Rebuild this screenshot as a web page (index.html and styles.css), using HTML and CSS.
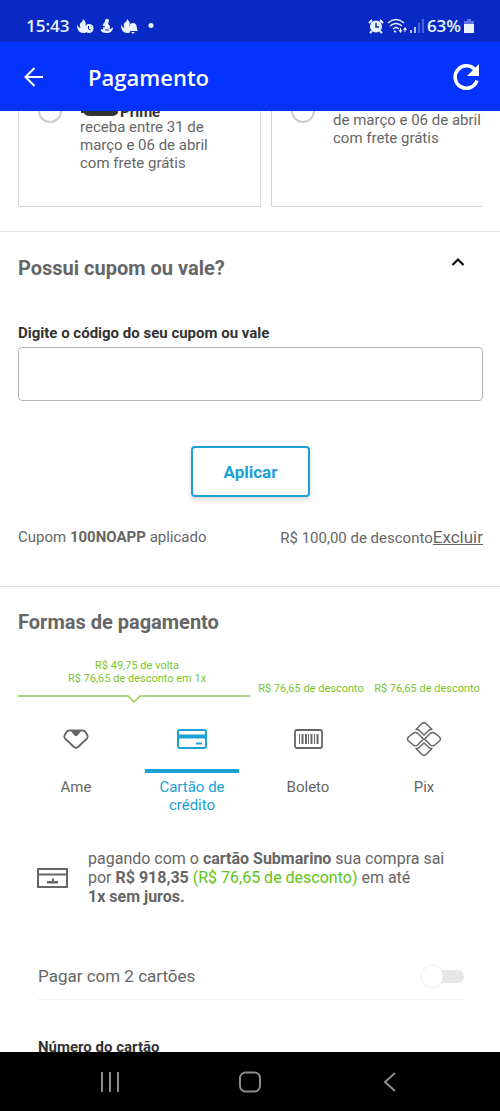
FILE: index.html
```html
<!DOCTYPE html>
<html lang="pt-BR">
<head>
<meta charset="utf-8">
<meta name="viewport" content="width=device-width, initial-scale=1">
<title>Pagamento</title>
<link rel="stylesheet" href="styles.css">
</head>
<body>
<div class="screen">
  <div class="status">
    <div class="status-group">
      <span>15:43</span>
      <svg class="weather" width="18" height="16" viewBox="0 0 18 16"><path d="M1 6c0 8 3 9 8 9 3-1 3-6 0-7 2-3 0-5-2-7 0 4-4 3-3 7 0 2 2 3 3 1-3 2-5 0-6-3z" fill="#eaf3ff"/><circle cx="13" cy="10.500" r="4.500" fill="#eaf3ff"/><path d="M12.500 8v3l2 1" fill="none" stroke="#0829c4"/></svg>
      <svg class="weather" width="14" height="16" viewBox="0 0 14 16"><path d="M5 3c0-3 4-3 4 0l-1 3c3 2 2 5 1 5 2 0 3-1 4-2 0 4-3 6-6 6s-7-1-6-4c2 1 3 0 2-3-1-2 2-3 2-5z" fill="#eaf3ff"/><path d="M2 8l3 1m0 3h4" stroke="#0829c4"/></svg>
      <svg class="weather" width="18" height="16" viewBox="0 0 18 16"><path d="M1 6c0 8 3 9 8 9 2-1 2-6 0-7 2-3 0-5-2-7 0 4-4 3-3 7 0 2 2 3 3 1-3 2-5 0-6-3z" fill="#eaf3ff"/><path d="M8 13c2-2 0-8 5-8s3 6 5 8zM11 14h4l-2 2z" fill="#eaf3ff"/></svg>
      <svg class="more" width="6" height="16" viewBox="0 0 6 16"><circle cx="3" cy="7.500" r="2.500" fill="#eaf3ff"/></svg>
    </div>
    <div class="status-group status-right">
      <svg width="16" height="16" viewBox="0 0 16 16"><circle cx="8" cy="8.500" r="6" fill="#eaf3ff"/><path d="M1 5l3-3M12 2l3 3M4 13l-2 2M12 13l2 2" stroke="#eaf3ff" stroke-width="2"/><path d="M8 5v4h3" fill="none" stroke="#0829c4" stroke-width="1.500"/></svg>
      <svg width="20" height="16" viewBox="0 0 20 16" fill="none" stroke="#eaf3ff" stroke-width="1.500"><path d="M1 5q8-7 16 0M3 8q6-5 12 0M6 11q3-3 6 0M7 13l2 1"/><path d="M13.500 10v4M18 14v-4" stroke-width="1"/><path d="M11.500 12h4l-2 3zM16 12h4l-2-3z" fill="#eaf3ff" stroke="none"/></svg>
      <svg class="signal" width="14" height="16" viewBox="0 0 14 16"><path d="M1 12v3M5 9v6" stroke="#eaf3ff" stroke-width="1.500"/><path d="M9 5v10M13 1v14" stroke="#5b74e6" stroke-width="1.500"/></svg>
      <span>63%</span>
      <svg class="battery" width="10" height="16" viewBox="0 0 10 16"><path d="M0 3h3V1h4v2h3v4H0z" fill="#5b74e6"/><path d="M0 6h10v9H0z" fill="#eaf3ff"/></svg>
    </div>
  </div>
  <header class="appbar">
    <button class="icon-button" type="button" aria-label="Voltar"><svg width="20" height="20" viewBox="0 0 20 20" fill="none" stroke="#fff" stroke-width="2"><path d="M19 10H2M10.500 1L1.500 10l9 9"/></svg></button>
    <h1 class="title">Pagamento</h1>
    <button class="icon-button" type="button" aria-label="Atualizar"><svg width="28" height="28" viewBox="0 0 28 28"><path d="M23.500 7.500A11.200 11.200 0 1 0 25 17.500" fill="none" stroke="#fff" stroke-width="3.600"/><path d="M27 1v12H15z" fill="#fff"/></svg></button>
  </header>

  <main class="content">
    <section class="shipping">
      <label class="ship-card">
        <input class="radio" type="radio" name="frete">
        <span class="ship-text"><strong class="ship-name"><svg width="40" height="14" viewBox="0 0 40 14"><path d="M1 1h6v3h31v4q-2 3-6 3H10q-5 0-6-3H1z" fill="#333"/></svg>Prime</strong>receba entre 31 de março e 06 de abril com frete grátis</span>
      </label>
      <label class="ship-card ship-next">
        <input class="radio" type="radio" name="frete">
        <span class="ship-text">de março e 06 de abril com frete grátis</span>
      </label>
    </section>

    <section class="coupon">
      <div class="coupon-head">
        <h2 class="heading">Possui cupom ou vale?</h2>
        <button class="icon-button" type="button" aria-label="Recolher"><svg width="14" height="10" viewBox="0 0 14 10"><path d="M1.500 8L7 2.500 12.500 8" fill="none" stroke="#111" stroke-width="2.200"/></svg></button>
      </div>
      <label class="field-label" for="cupom">Digite o código do seu cupom ou vale</label>
      <input class="text-input" id="cupom" type="text">
      <button class="apply" type="button">Aplicar</button>
      <div class="applied">
        <span>Cupom <strong>100NOAPP</strong> aplicado</span>
        <span class="discount">R$ 100,00 de desconto<a class="remove" href="#">Excluir</a></span>
      </div>
    </section>

    <section class="payment">
      <h2 class="heading">Formas de pagamento</h2>
      <div class="offers">
        <div class="offer-wide">
          <p class="offer-text">R$ 49,75 de volta<br>R$ 76,65 de desconto em 1x</p>
          <div class="bracket"><span class="rule"></span><svg width="14" height="8" viewBox="0 0 14 8"><path d="M0 1h1l6 6 6-6h1" fill="none" stroke="#95cb55" stroke-width="1.500"/></svg><span class="rule"></span></div>
        </div>
        <p class="offer">R$ 76,65 de desconto</p>
        <p class="offer">R$ 76,65 de desconto</p>
      </div>
      <div class="methods">
        <button class="method" type="button">
          <svg width="36" height="36" viewBox="0 0 36 36"><path d="M11.500 9.500h13q1.500 0 2.500 1l2.500 4q.800 1.800-.500 3l-9 8.500q-2 1.500-4 0l-9-8.500q-1.300-1.200-.500-3l2.500-4q1-1 2.500-1z" fill="none" stroke="#666" stroke-width="1.800" stroke-linejoin="round"/><path d="M12 9h12l-4.500 5.500q-1.500 1.300-3 0z" fill="#666"/></svg>
          <span class="method-name">Ame</span>
        </button>
        <button class="method selected" type="button">
          <svg width="36" height="36" viewBox="0 0 36 36"><rect x="4" y="9" width="28" height="18" rx="2" fill="none" stroke="#1ba1d6" stroke-width="2"/><path d="M4 15.500h28" stroke="#1ba1d6" stroke-width="4"/><path d="M22 22.500h6" stroke="#1ba1d6" stroke-width="2"/></svg>
          <span class="method-name">Cartão de crédito</span>
        </button>
        <button class="method" type="button">
          <svg width="36" height="36" viewBox="0 0 36 36"><rect x="5" y="9" width="27" height="18" rx="2" fill="none" stroke="#666" stroke-width="1.800"/><path d="M9.500 13v10M18.500 13v10M24.500 13v10" stroke="#666"/><path d="M12.500 13v10M16 13v10M21.500 13v10M27.500 13v10" stroke="#666" stroke-width="2"/></svg>
          <span class="method-name">Boleto</span>
        </button>
        <button class="method" type="button">
          <svg width="36" height="36" viewBox="0 0 36 36" fill="none" stroke="#666" stroke-width="1.500" stroke-linejoin="round"><path d="M10 8.500h2l6 5.500 6-5.500h2l-6-6q-2-1.800-4 0zM10 27.500h2l6-5.500 6 5.500h2l-6 6q-2 1.800-4 0z"/><path d="M17.500 18l-6-5.800q-1.500-1.200-3.500-.500L2.500 16q-2 2 0 4l5.500 4.500q2 .700 3.500-.500zM18.500 18l6-5.800q1.500-1.200 3.500-.500l5.500 4.300q2 2 0 4L28 24.500q-2 .700-3.500-.500z"/></svg>
          <span class="method-name">Pix</span>
        </button>
      </div>
      <div class="promo">
        <svg width="31" height="20" viewBox="0 0 31 20"><path d="M1 1h29v18H1zM1 6.500h29" fill="none" stroke="#666" stroke-width="2"/><path d="M10 13h5v-2.500h2V13h4v2.500H10z" fill="#666"/></svg>
        <p class="promo-text">pagando com o <strong>cartão Submarino</strong> sua compra sai por <strong>R$ 918,35</strong> <span class="green">(R$ 76,65 de desconto)</span> em até <strong class="installment">1x sem juros.</strong></p>
      </div>
      <div class="two-cards">
        <label for="dois">Pagar com 2 cartões</label>
        <input class="switch" id="dois" type="checkbox" role="switch">
      </div>
      <div class="card-form">
        <label class="field-label" for="numero">Número do cartão</label>
        <input class="text-input" id="numero" type="text">
      </div>
    </section>
  </main>

  <nav class="navbar">
    <button class="icon-button" type="button" aria-label="Recentes"><svg width="22" height="22" viewBox="0 0 22 22"><path d="M3 1v20M11 1v20M19 1v20" stroke="#8c8c8c" stroke-width="2"/></svg></button>
    <button class="icon-button" type="button" aria-label="Início"><svg width="22" height="22" viewBox="0 0 22 22"><rect x="1" y="1.500" width="20" height="19" rx="5.500" fill="none" stroke="#8c8c8c" stroke-width="2"/></svg></button>
    <button class="icon-button" type="button" aria-label="Voltar ao anterior"><svg width="22" height="22" viewBox="0 0 22 22"><path d="M16 2L6 11l10 9" fill="none" stroke="#8c8c8c" stroke-width="2"/></svg></button>
  </nav>
</div>
</body>
</html>
```
FILE: styles.css
```css
* { box-sizing: border-box; }
body { margin: 0; background: #fff; color: #666; font: 16px/18px Roboto, sans-serif; }
h1, h2, p { margin: 0; }
svg { display: block; flex: none; }
button { font: inherit; color: inherit; }
strong { font-weight: 700; }

.screen { height: 100vh; display: flex; flex-direction: column; }

.status { flex: none; height: 42px; padding: 10px 26px 0; display: flex; justify-content: space-between; align-items: center; background: #0829c4; color: #eaf3ff; font: 600 17px/20px "Open Sans", sans-serif; }
.status-group { display: flex; align-items: center; gap: 6px; }
.status-right { gap: 3px; }
.more { margin-left: 4px; }

.appbar { flex: none; height: 69px; padding: 0 20px 0 24px; display: flex; align-items: center; background: #0433ff; color: #fff; }
.title { flex: 1; padding-left: 44px; font: 600 22px/28px "Open Sans", sans-serif; }
.icon-button { padding: 0; border: 0; background: none; }

.content { flex: 1; min-height: 0; overflow: hidden; }

.shipping { display: flex; gap: 10px; padding: 0 17px 24px 18px; overflow: hidden; border-bottom: 1px solid #e2e2e2; font-size: 15px; }
.ship-card { flex: 0 0 243px; height: 96px; padding: 0 44px 0 33px; display: flex; gap: 18px; border: 1px solid #d5d5d5; border-top: 0; }
.ship-next { flex: 1 0 212px; padding-right: 0; border-right: 0; }
.radio { appearance: none; flex: none; width: 24px; height: 24px; margin: -12px 0 0 -14px; border: 2px solid #ccc; border-radius: 50%; background: #fff; }
.ship-name { display: flex; align-items: center; margin: -8px 0 -3px; color: #333; }

.coupon { padding: 25px 17px 39px 18px; border-bottom: 1px solid #e2e2e2; }
.coupon-head { display: flex; justify-content: space-between; align-items: flex-start; padding-right: 18px; }
.heading { font-size: 20px; line-height: 22px; font-weight: 700; }
.field-label { display: block; color: #333; font-size: 15px; font-weight: 700; }
.coupon-head + .field-label { margin-top: 45px; }
.text-input { display: block; width: 100%; height: 54px; margin-top: 5px; padding: 0 12px; border: 1px solid #b5b5b5; border-radius: 4px; background: #fff; font: inherit; }
.apply { display: block; margin: 45px auto 0; width: 119px; height: 51px; border: 2px solid #1ba1d6; border-radius: 4px; background: #fff; color: #1ba1d6; font-size: 17px; font-weight: 700; box-shadow: 0 3px 5px #d8d8d8; }
.applied { display: flex; justify-content: space-between; margin-top: 31px; font-size: 15px; }
.remove { color: inherit; font-size: 17px; }

.payment { padding: 24px 18px 0; }
.offers { display: grid; grid-template-columns: 2fr 1fr 1fr; margin-top: 26px; color: #7ac52c; font-size: 11px; line-height: 13px; text-align: center; white-space: nowrap; }
.offer-text { padding-left: 6px; }
.bracket { display: flex; margin-top: 10px; }
.rule { flex: 1; height: 2px; background: #b0d780; }
.offer { padding: 23px 0 0 6px; }

.methods { display: grid; grid-template-columns: repeat(4, 1fr); margin-top: 18px; font-size: 15px; }
.method { display: flex; flex-direction: column; align-items: center; padding: 0; border: 0; background: none; }
.method-name { width: 94px; margin-top: 12px; padding-top: 5px; border-top: 4px solid transparent; }
.selected { color: #1ba1d6; }
.selected .method-name { border-color: #1ba1d6; }

.promo { display: flex; align-items: center; gap: 20px; margin-top: 35px; padding: 0 19px; }
.promo-text { line-height: 19px; }
.green { color: #61c313; }
.installment { display: block; }

.two-cards { display: flex; justify-content: space-between; align-items: center; margin: 59px 18px 0 20px; padding-bottom: 12px; border-bottom: 1px solid #f2f2f2; font-size: 17px; line-height: 22px; }
.switch { appearance: none; position: relative; width: 38px; height: 13px; margin: 0; border-radius: 7px; background: #e6e6e6; }
.switch::before { content: ""; position: absolute; left: -4px; top: -4px; width: 21px; height: 21px; border-radius: 50%; background: #fff; box-shadow: 0 0 3px #ddd; }
.card-form { padding: 38px 18px 0 20px; }

.navbar { flex: none; height: 59px; padding: 0 40px; display: grid; grid-template-columns: repeat(3, 1fr); align-items: center; justify-items: center; background: #000; }
```
